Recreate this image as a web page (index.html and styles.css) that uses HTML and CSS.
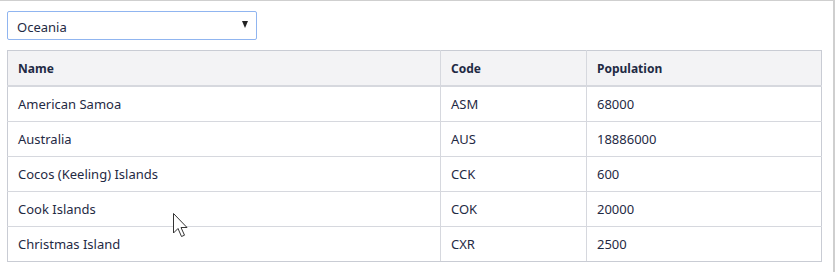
FILE: index.html
```html
<!DOCTYPE html>
<html>
<head>
<meta charset="utf-8">
<link rel="stylesheet" href="styles.css">
</head>
<body>
<div class="frame">
  <div class="select">
    <span>Oceania</span>
    <span class="caret"></span>
  </div>
  <table class="grid">
    <thead>
      <tr><th class="c1">Name</th><th class="c2">Code</th><th class="c3">Population</th></tr>
    </thead>
    <tbody>
      <tr><td>American Samoa</td><td>ASM</td><td>68000</td></tr>
      <tr><td>Australia</td><td>AUS</td><td>18886000</td></tr>
      <tr><td>Cocos (Keeling) Islands</td><td>CCK</td><td>600</td></tr>
      <tr><td>Cook Islands</td><td>COK</td><td>20000</td></tr>
      <tr><td>Christmas Island</td><td>CXR</td><td>2500</td></tr>
    </tbody>
  </table>
  <svg class="cursor" width="20" height="28" viewBox="0 0 20 28">
    <path d="M1.5 1.5 L1.5 21 L6 16.5 L9.5 24.5 L12.5 23.2 L9 15.5 L15 15.5 Z" fill="#fff" stroke="#333" stroke-width="1" stroke-linejoin="miter"/>
  </svg>
</div>
</body>
</html>
```
FILE: styles.css
```css
html, body {
  margin: 0;
  padding: 0;
  background: #fff;
}
.frame {
  position: relative;
  width: 833px;
  height: 271px;
  border-top: 1px solid #cfcfcf;
  border-right: 2px solid #cfcfcf;
  font-family: "Noto Sans", "Open Sans", sans-serif;
  color: #1f2a44;
}
.select {
  box-sizing: border-box;
  margin: 10px 0 0 7px;
  width: 250px;
  height: 29px;
  border: 1px solid #90b5f0;
  border-radius: 2px;
  display: flex;
  align-items: center;
  justify-content: space-between;
  padding: 3px 9px 0 9px;
  font-size: 13px;
}
.caret {
  width: 0;
  height: 0;
  border-left: 3.5px solid transparent;
  border-right: 3.5px solid transparent;
  border-top: 7px solid #222;
  margin-right: -1px;
  margin-top: -5px;
}
.grid {
  margin: 10px 0 0 7px;
  width: 815px;
  border-collapse: collapse;
  font-size: 13px;
}
.grid th, .grid td {
  text-align: left;
  padding: 0 0 0 10px;
  border: 1px solid #d6d8de;
}
.grid th {
  background: #f3f3f5;
  font-weight: bold;
  font-size: 12px;
  height: 33px;
  border-bottom: 2px solid #d6d8de;
  border-top: 1px solid #c9ccd4;
  padding-top: 1px;
}
.grid td {
  height: 34px;
}
.grid tr > *:first-child { border-left-color: #c9ccd4; }
.grid tr > *:last-child { border-right-color: #c9ccd4; }
.grid td:nth-child(2), .grid td:nth-child(3) { border-left-color: #c9ccd4; }
.grid tbody tr:last-child td { border-bottom-color: #c9ccd4; }
.c1 { width: 422px; }
.c2 { width: 135px; }
.cursor {
  position: absolute;
  left: 172px;
  top: 211px;
}
```
